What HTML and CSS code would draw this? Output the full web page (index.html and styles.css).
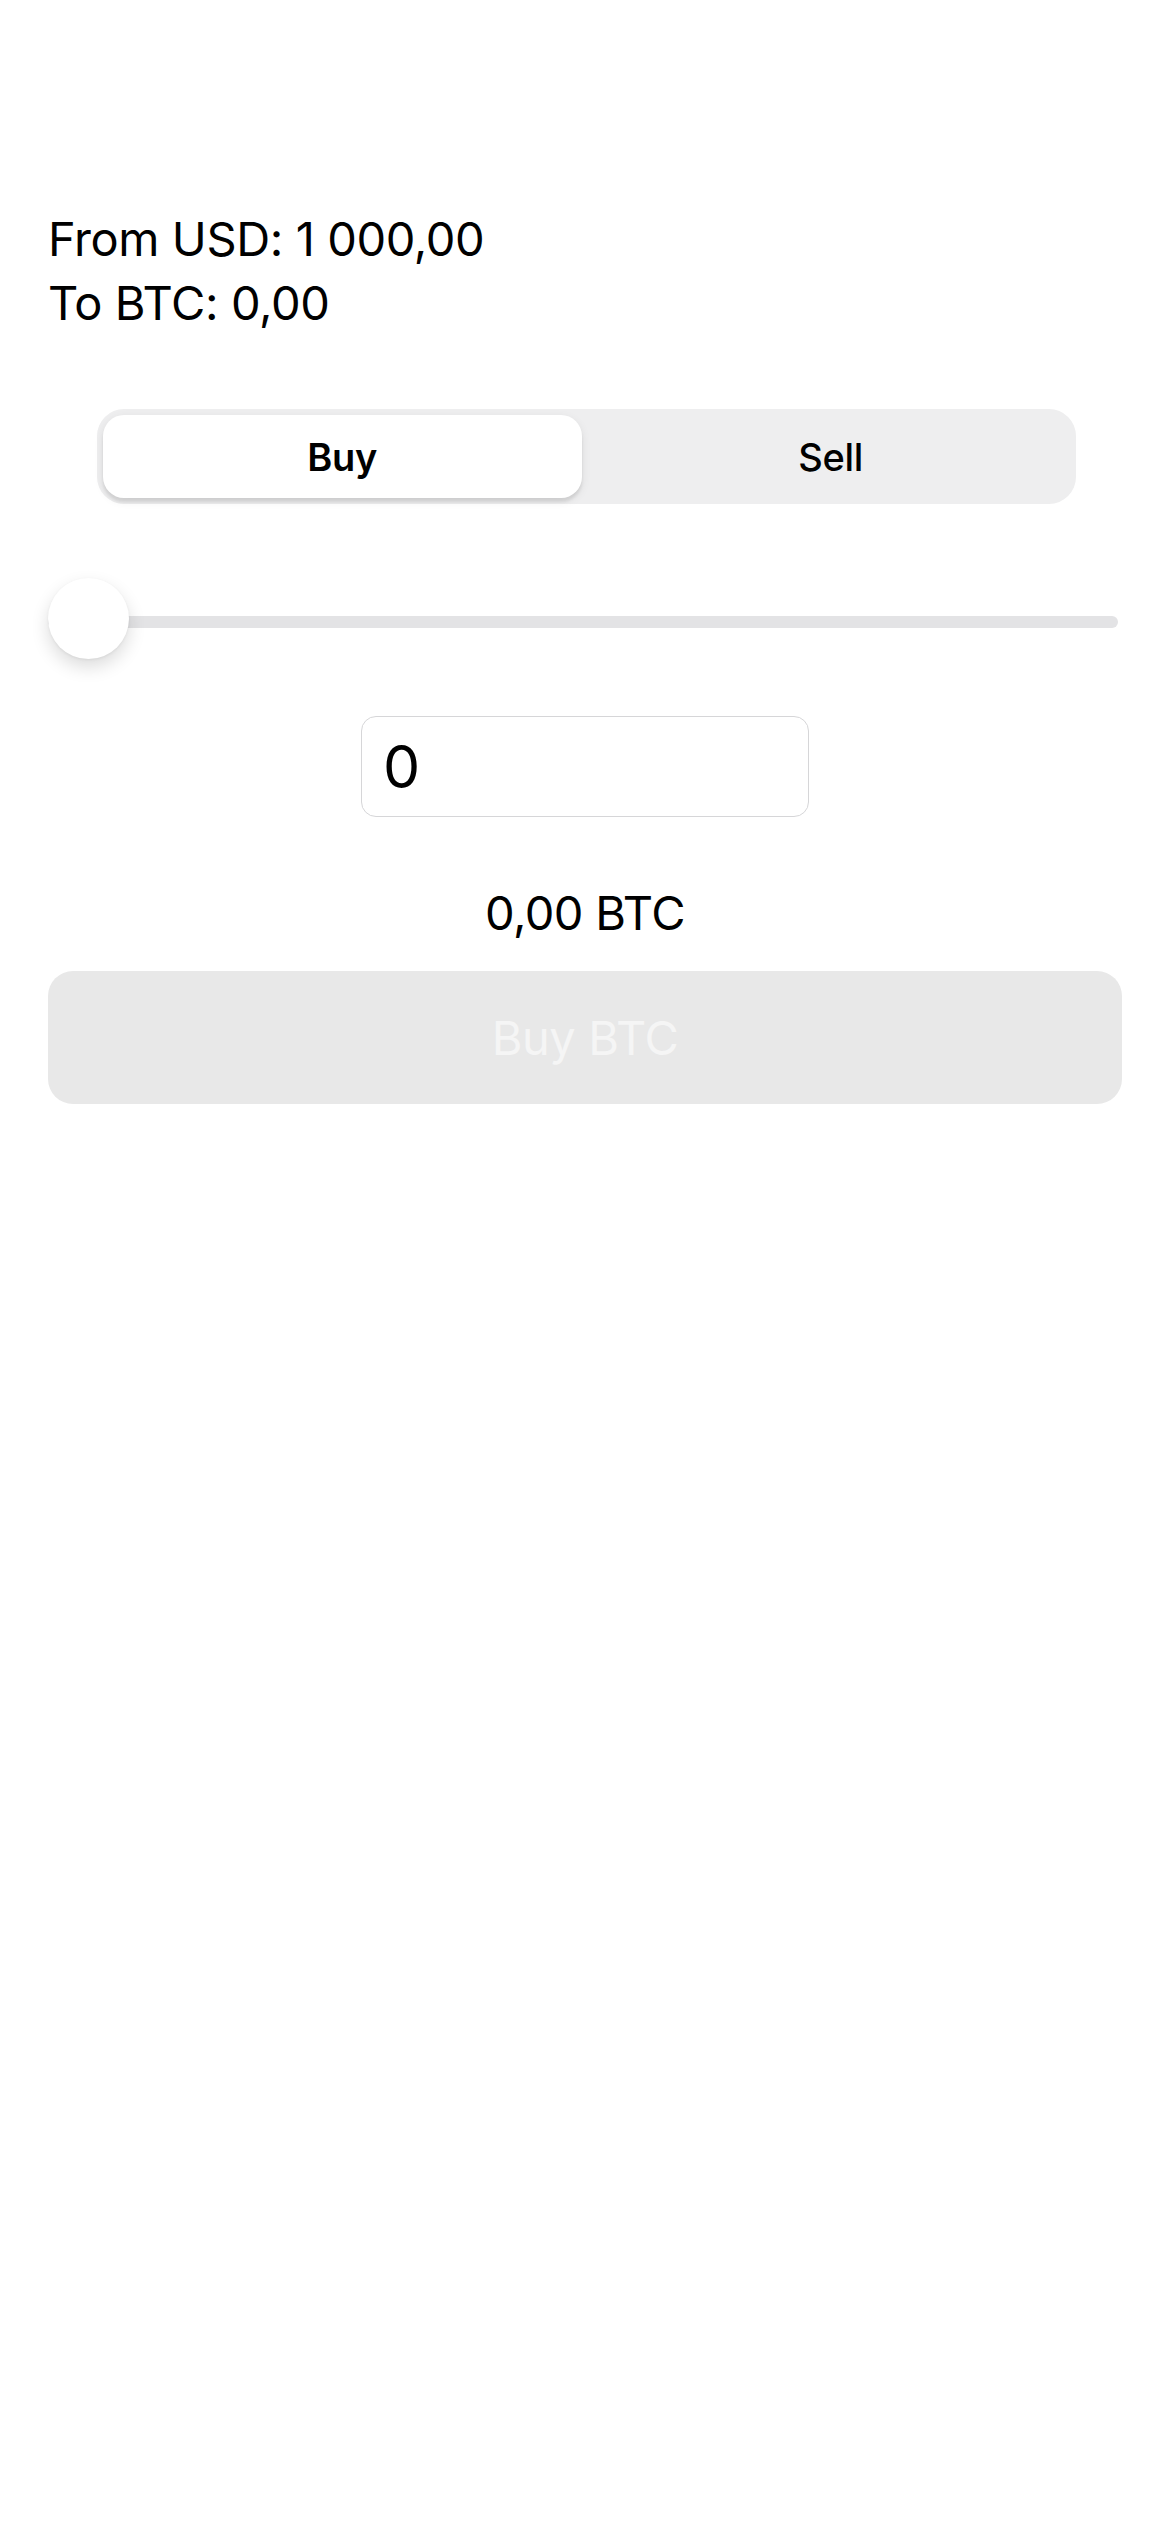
FILE: index.html
```html
<!DOCTYPE html>
<html lang="en">
<head>
<meta charset="utf-8">
<title>Exchange</title>
<link rel="stylesheet" href="styles.css">
</head>
<body>
<main class="screen">
  <section class="balances">
    <div class="balance-line">From USD: 1 000,00</div>
    <div class="balance-line">To BTC: 0,00</div>
  </section>

  <div class="segmented">
    <div class="segment segment-selected">Buy</div>
    <div class="segment">Sell</div>
  </div>

  <div class="slider">
    <div class="slider-track"></div>
    <div class="slider-thumb"></div>
  </div>

  <div class="amount-row">
    <input class="amount-input" type="text" value="0">
  </div>

  <div class="result">0,00 BTC</div>

  <button class="action-button" type="button">Buy BTC</button>
</main>
</body>
</html>
```

FILE: styles.css
```css
html, body {
  margin: 0;
  padding: 0;
  background: #ffffff;
}

body {
  font-family: Inter, "Noto Sans", "Liberation Sans", sans-serif;
  color: #000000;
  width: 1170px;
  height: 2532px;
}

.screen {
  padding: 207px 48px 0 48px;
  display: flex;
  flex-direction: column;
}

.balances {
  display: flex;
  flex-direction: column;
}

.balance-line {
  font-size: 47px;
  line-height: 64px;
  letter-spacing: -0.4px;
}

.segmented {
  margin: 74px 46px 0 49px;
  height: 95px;
  box-sizing: border-box;
  padding: 6px;
  background: #eeeeef;
  border-radius: 27px;
  display: grid;
  grid-template-columns: 1fr 1fr;
  gap: 10px;
}

.segment {
  display: flex;
  align-items: center;
  justify-content: center;
  font-size: 38px;
  font-weight: 500;
  letter-spacing: -0.3px;
  border-radius: 21px;
}

.segment-selected {
  background: #ffffff;
  font-weight: 600;
  box-shadow: 0 4px 3px rgba(0, 0, 0, 0.08), 0 3px 10px rgba(0, 0, 0, 0.08);
}

.slider {
  position: relative;
  margin-top: 74px;
  height: 82px;
  margin-right: 4px;
}

.slider-track {
  position: absolute;
  left: 0;
  right: 0;
  top: 38px;
  height: 12px;
  border-radius: 6px;
  background: #e3e3e5;
}

.slider-thumb {
  position: absolute;
  left: 0;
  top: 0;
  width: 81px;
  height: 81px;
  border-radius: 50%;
  background: #ffffff;
  box-shadow: 0 8px 18px rgba(0, 0, 0, 0.14), 0 1px 3px rgba(0, 0, 0, 0.06);
}

.amount-row {
  margin-top: 56px;
  display: flex;
  justify-content: center;
}

.amount-input {
  width: 448px;
  height: 101px;
  box-sizing: border-box;
  border: 1.5px solid #d6d6d8;
  border-radius: 15px;
  padding: 0 21px;
  font-family: Inter, "Noto Sans", "Liberation Sans", sans-serif;
  font-size: 59px;
  color: #000000;
  background: #ffffff;
  outline: none;
}

.result {
  margin-top: 64px;
  text-align: center;
  font-size: 47px;
  line-height: 64px;
  letter-spacing: -0.6px;
}

.action-button {
  margin-top: 26px;
  height: 133px;
  width: 100%;
  border: none;
  border-radius: 25px;
  background: #e8e8e8;
  color: #f5f5f5;
  font-family: Inter, "Noto Sans", "Liberation Sans", sans-serif;
  font-size: 47px;
  letter-spacing: -0.4px;
  padding: 0;
}
```
